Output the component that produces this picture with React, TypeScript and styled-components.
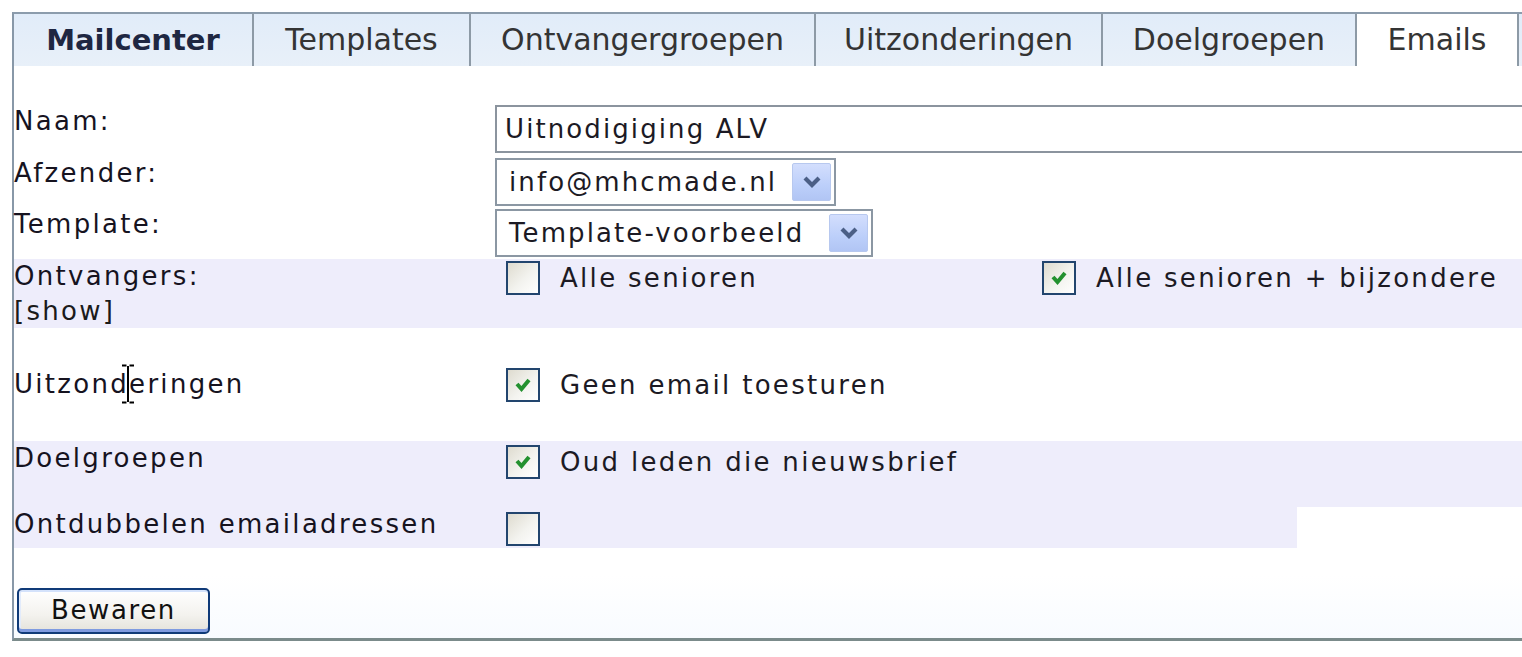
import React from 'react';
import styled, {createGlobalStyle} from "styled-components";

const GlobalStyle = createGlobalStyle`
  body {
    margin: 0;
    background: #ffffff;
    overflow: hidden;
    font-family: "DejaVu Sans", Verdana, sans-serif;
    color: #16131f;
  }
`

const Panel = styled.div`
  margin: 12px 0 0 12px;
  width: 1560px;
  border-left: 2px solid #8898a8;
  border-top: 2px solid #8c9cac;
  border-bottom: 3px solid #7b8b8b;
  background: linear-gradient(#ffffff 90%, #f8fbff);
`

const TabBar = styled.div`
  display: flex;
  height: 52px;
  background: linear-gradient(#e1ecf9, #e8f0f9);
`

const Tab = styled.div<{ $w: number; $active?: boolean; $bold?: boolean }>`
  box-sizing: border-box;
  width: ${p => p.$w}px;
  border-right: 2px solid #8d9aa6;
  text-align: center;
  line-height: 52px;
  font-size: ${p => p.$bold ? 29 : 30}px;
  font-weight: ${p => p.$bold ? 'bold' : 'normal'};
  color: ${p => p.$bold ? '#1e2742' : '#343434'};
  background: ${p => p.$active ? '#ffffff' : 'transparent'};
`

const Form = styled.div`
  padding-top: 38px;
`

const Row = styled.div<{ $h: number; $shaded?: boolean; $center?: boolean; $w?: number }>`
  display: grid;
  grid-template-columns: 481px 1fr;
  height: ${p => p.$h}px;
  width: ${p => p.$w ? `${p.$w}px` : 'auto'};
  align-items: ${p => p.$center ? 'center' : 'start'};
  background: ${p => p.$shaded ? '#eeedfb' : 'transparent'};
`

const Label = styled.div`
  font-size: 26px;
  line-height: 35px;
  letter-spacing: 2.3px;
  color: #16131f;
`

const Show = styled.span`
  color: #1a1a1a;
`

const Field = styled.div<{ $top?: number }>`
  margin-top: ${p => p.$top ?? 0}px;
`

const TextInput = styled.div`
  box-sizing: border-box;
  width: 1100px;
  height: 48px;
  border: 2px solid #8b949e;
  padding-left: 8px;
  font-size: 26px;
  line-height: 44px;
  letter-spacing: 2.1px;
  color: #1c1a24;
  background: #ffffff;
`

const Select = styled.div<{ $w: number }>`
  box-sizing: border-box;
  width: ${p => p.$w}px;
  height: 48px;
  border: 2px solid #8b97a3;
  padding: 3px 3px 3px 12px;
  display: flex;
  align-items: center;
  justify-content: space-between;
  font-size: 26px;
  letter-spacing: 2.1px;
  color: #1c1a24;
  background: #ffffff;
`

const ArrowButton = styled.span`
  box-sizing: border-box;
  width: 39px;
  height: 38px;
  display: flex;
  align-items: center;
  justify-content: center;
  border: 1px solid #b7c8ef;
  border-radius: 2px;
  background: linear-gradient(#d3defd, #bccffa 60%, #b1c5f4);
`

const Options = styled.div<{ $top?: number }>`
  display: grid;
  grid-template-columns: 536px auto;
  margin-top: ${p => p.$top ?? 0}px;
`

const Option = styled.label`
  display: flex;
  align-items: center;
  height: 35px;
  padding-left: 11px;
  gap: 20px;
  font-size: 26px;
  letter-spacing: 2.3px;
  color: #1c1a24;
`

const Box = styled.span`
  box-sizing: border-box;
  width: 34px;
  height: 34px;
  flex: none;
  border: 2px solid #22456e;
  background: linear-gradient(135deg, #dedbcf, #f3f3ef 55%, #ffffff);
  display: flex;
  align-items: center;
  justify-content: center;
`

const Footer = styled.div`
  padding: 40px 0 4px 3px;
`

const SaveButton = styled.button`
  box-sizing: border-box;
  width: 193px;
  height: 46px;
  border: 2px solid #0f3a78;
  border-radius: 5px;
  background: linear-gradient(#ffffff, #f3f2ee 60%, #e4e2da);
  box-shadow: inset 0 -3px 0 #7f9be0, inset 0 2px 0 #d4e2fb, inset 2px 0 0 #e2ebfb;
  font-family: "DejaVu Sans", Verdana, sans-serif;
  font-size: 26px;
  letter-spacing: 1.6px;
  color: #111111;
  padding: 0 0 2px;
`

const Cursor = styled.svg`
  position: absolute;
  left: 120px;
  top: 364px;
`

const Chevron = () => (
  <svg width="20" height="14" viewBox="0 0 20 14">
    <polyline points="3,3 10,10 17,3" fill="none" stroke="#4b5f86" strokeWidth="4.2"/>
  </svg>
)

const Checkbox = ({checked}: { checked?: boolean }) => (
  <Box>
    {checked &&
    <svg width="20" height="18" viewBox="0 0 20 18">
      <polyline points="4,8 8.5,13 16,4" fill="none" stroke="#23912f" strokeWidth="4"/>
    </svg>}
  </Box>
)

const tabs = [
  {title: 'Mailcenter', w: 240, bold: true},
  {title: 'Templates', w: 217},
  {title: 'Ontvangergroepen', w: 345},
  {title: 'Uitzonderingen', w: 287},
  {title: 'Doelgroepen', w: 254},
  {title: 'Emails', w: 162, active: true},
]

function App() {
  return (
    <>
      <GlobalStyle/>
      <Panel>
        <TabBar>
          {tabs.map(t => (
            <Tab key={t.title} $w={t.w} $bold={t.bold} $active={t.active}>{t.title}</Tab>
          ))}
        </TabBar>
        <Form>
          <Row $h={52}>
            <Label>Naam:</Label>
            <Field $top={1}>
              <TextInput>Uitnodigiging ALV</TextInput>
            </Field>
          </Row>
          <Row $h={51}>
            <Label>Afzender:</Label>
            <Field $top={2}>
              <Select $w={341}>info@mhcmade.nl<ArrowButton><Chevron/></ArrowButton></Select>
            </Field>
          </Row>
          <Row $h={52}>
            <Label>Template:</Label>
            <Field $top={2}>
              <Select $w={378}>Template-voorbeeld<ArrowButton><Chevron/></ArrowButton></Select>
            </Field>
          </Row>
          <Row $h={69} $shaded>
            <Label>Ontvangers:<br/><Show>[show]</Show></Label>
            <Options $top={1}>
              <Option><Checkbox/>Alle senioren</Option>
              <Option><Checkbox checked/>Alle senioren + bijzondere</Option>
            </Options>
          </Row>
          <Row $h={113} $center>
            <Label>Uitzonderingen</Label>
            <Options>
              <Option><Checkbox checked/>Geen email toesturen</Option>
            </Options>
          </Row>
          <Row $h={66} $shaded>
            <Label>Doelgroepen</Label>
            <Options $top={3}>
              <Option><Checkbox checked/>Oud leden die nieuwsbrief</Option>
            </Options>
          </Row>
          <Row $h={41} $shaded $w={1283}>
            <Label>Ontdubbelen emailadressen</Label>
            <Options $top={4}>
              <Option><Checkbox/></Option>
            </Options>
          </Row>
        </Form>
        <Footer>
          <SaveButton>Bewaren</SaveButton>
        </Footer>
      </Panel>
      <Cursor width="16" height="40" viewBox="0 0 16 40">
        <path d="M2 1.5 H6.5 M9.5 1.5 H14 M8 2 V38 M2 38.5 H6.5 M9.5 38.5 H14" stroke="#ffffff" strokeWidth="4"/>
        <path d="M2 1.5 H6.5 M9.5 1.5 H14 M8 2 V38 M2 38.5 H6.5 M9.5 38.5 H14" stroke="#000000" strokeWidth="2"/>
      </Cursor>
    </>
  );
}

export default App;
